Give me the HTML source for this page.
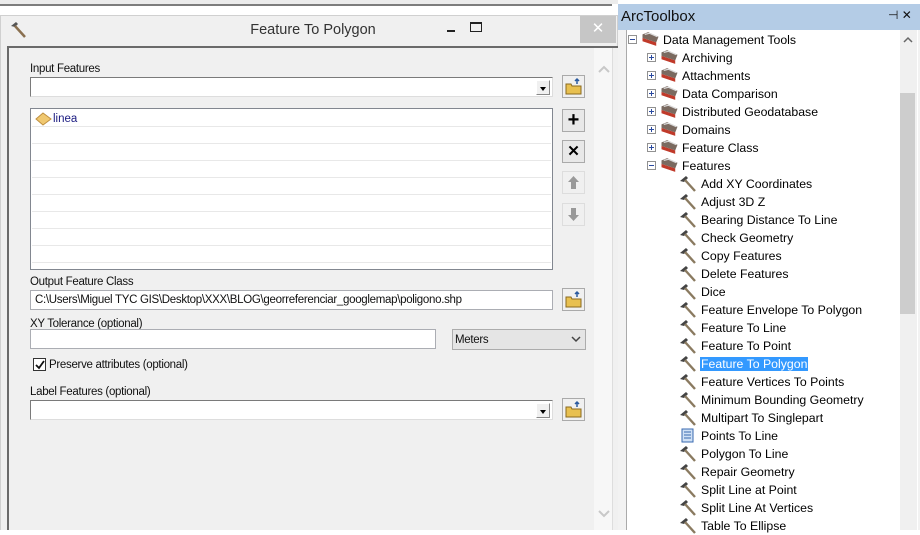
<!DOCTYPE html>
<html><head><meta charset="utf-8"><style>
*{margin:0;padding:0;box-sizing:border-box}
body{width:920px;height:530px;overflow:hidden;background:#fff;font-family:"Liberation Sans",sans-serif;font-size:12px;color:#000;position:relative}
.a{position:absolute}
.lbl{position:absolute;font-size:11.5px;letter-spacing:-0.3px;color:#111}
.box{position:absolute;background:#fff;border:1px solid #abadb3}
.cb{position:absolute;background:#fff;border:1px solid #7a7a7a;border-right-color:#ddd;border-bottom-color:#ddd}
.dd{position:absolute;right:2px;top:2px;width:14px;height:15px;background:#f0f0f0;border:1px solid #888;border-top-color:#fff;border-left-color:#fff}
.dd:after{content:"";position:absolute;left:3px;top:6px;border:3px solid transparent;border-top:4px solid #000}
.fb{position:absolute;width:23px;height:23px;border:1px solid #aaa;background:#f0f0f0}
.btn{position:absolute;width:23px;height:23px;border:1px solid #aaa;background:#e8e8e8;font-weight:bold;text-align:center;line-height:21px}
.tr{position:absolute;font-size:12.3px;color:#000;white-space:nowrap}
.pm{position:absolute;width:9px;height:9px;border:1px solid #919191;background:#fff}
.pm:before{content:"";position:absolute;left:1px;top:3px;width:5px;height:1px;background:#2a4aa0}
.pm.p:after{content:"";position:absolute;left:3px;top:1px;width:1px;height:5px;background:#2a4aa0}
.tb{position:absolute}
.hm{position:absolute;width:18px;height:18px}
</style></head><body>
<div class="a" style="left:0;top:0;width:618px;height:4px;background:#ececec"></div>
<div class="a" style="left:0;top:4px;width:612px;height:2px;background:#7d7d7d"></div>
<div class="a" style="left:0;top:15px;width:618px;height:515px;background:#f0f0f0;border:1px solid #d0d0d0;border-bottom:none"></div>
<div class="a" style="left:1px;top:16px;width:616px;height:30px;background:#f0f0f0"></div>
<svg class="a" style="left:8px;top:20px" width="20" height="20" viewBox="0 0 20 20"><path d="M3 6 L8 2 L10 4 L7 7 Z" fill="#555"/><path d="M7 6 L17 17" stroke="#8a7050" stroke-width="2.5"/></svg>
<div class="a" style="left:0;width:626px;top:22px;text-align:center;font-size:14.5px;color:#333">Feature To Polygon</div>
<div class="a" style="left:447px;top:30px;width:8px;height:2px;background:#222"></div>
<div class="a" style="left:470px;top:22px;width:12px;height:10px;border:1px solid #222;border-top-width:2px"></div>
<div class="a" style="left:580px;top:16px;width:36px;height:27px;background:#c6c6c6;color:#fff;text-align:center;font-size:15px;line-height:26px">✕</div>
<div class="a" style="left:7px;top:46px;width:611px;height:484px;border-left:2px solid #6a6a6a;border-top:2px solid #6a6a6a;background:#f0f0f0"></div>
<div class="a" style="left:594px;top:48px;width:18px;height:482px;background:#f7f7f7"></div>
<svg class="a" style="left:597px;top:64px" width="14" height="10"><path d="M2 8 L7 3 L12 8" stroke="#c8c8c8" stroke-width="2" fill="none"/></svg>
<svg class="a" style="left:597px;top:509px" width="14" height="10"><path d="M2 2 L7 7 L12 2" stroke="#c8c8c8" stroke-width="2" fill="none"/></svg>
<div class="a" style="left:612px;top:48px;width:1px;height:482px;background:#ddd"></div>

<div class="lbl" style="left:30px;top:63px">Input Features</div>
<div class="cb" style="left:30px;top:77px;width:523px;height:20px"><div class="dd"></div></div>
<div class="fb" style="left:562px;top:75px"><svg width="21" height="21"><path d="M3 8 h5 l1 2 h9 v8 h-15z" fill="#e8c050" stroke="#8a6a20"/><path d="M14 3 v5 M12 5 l2 -2 2 2" stroke="#2a5aa0" stroke-width="1.5" fill="none"/></svg></div>

<div class="a" style="left:30px;top:108px;width:523px;height:162px;background:#fff;border:1px solid #828790"></div>
<div class="a" style="left:32px;top:126px;width:519px;height:1px;background:#e8e8e8;box-shadow:0 17px #e8e8e8,0 34px #e8e8e8,0 51px #e8e8e8,0 68px #e8e8e8,0 85px #e8e8e8,0 102px #e8e8e8,0 119px #e8e8e8,0 136px #e8e8e8"></div>
<svg class="a" style="left:35px;top:112px" width="18" height="14"><path d="M1 7 L8 1 L16 7 L8 13 Z" fill="#f0c870" stroke="#c09040"/></svg>
<div class="tr" style="left:53px;top:113px;color:#1a1a80;font-size:11.5px">linea</div>

<div class="btn" style="left:562px;top:109px;font-size:20px">+</div>
<div class="btn" style="left:562px;top:140px;font-size:15px">✕</div>
<div class="btn" style="left:562px;top:171px;background:#f0f0f0;border-color:#ddd"><svg width="21" height="21"><path d="M10.5 4 L16 10 H13 V17 H8 V10 H5 Z" fill="#999"/></svg></div>
<div class="btn" style="left:562px;top:203px;background:#f0f0f0;border-color:#ddd"><svg width="21" height="21"><path d="M10.5 17 L16 11 H13 V4 H8 V11 H5 Z" fill="#999"/></svg></div>

<div class="lbl" style="left:30px;top:276px">Output Feature Class</div>
<div class="box" style="left:30px;top:290px;width:523px;height:20px"></div>
<div class="lbl" style="left:35px;top:294px">C:\Users\Miguel TYC GIS\Desktop\XXX\BLOG\georreferenciar_googlemap\poligono.shp</div>
<div class="fb" style="left:562px;top:288px"><svg width="21" height="21"><path d="M3 8 h5 l1 2 h9 v8 h-15z" fill="#e8c050" stroke="#8a6a20"/><path d="M14 3 v5 M12 5 l2 -2 2 2" stroke="#2a5aa0" stroke-width="1.5" fill="none"/></svg></div>

<div class="lbl" style="left:30px;top:318px">XY Tolerance (optional)</div>
<div class="box" style="left:30px;top:329px;width:406px;height:20px"></div>
<div class="a" style="left:452px;top:329px;width:134px;height:21px;background:#e5e5e5;border:1px solid #acacac"></div>
<div class="lbl" style="left:455px;top:334px">Meters</div>
<svg class="a" style="left:570px;top:334px" width="12" height="10"><path d="M2 3 L6 7 L10 3" stroke="#444" stroke-width="1.5" fill="none"/></svg>

<div class="a" style="left:33px;top:358px;width:13px;height:13px;background:#fff;border:1px solid #333"></div>
<svg class="a" style="left:34px;top:359px" width="12" height="12"><path d="M2 6 L5 9 L10 2" stroke="#111" stroke-width="1.8" fill="none"/></svg>
<div class="lbl" style="left:49px;top:359px">Preserve attributes (optional)</div>

<div class="lbl" style="left:30px;top:386px">Label Features (optional)</div>
<div class="cb" style="left:30px;top:400px;width:523px;height:20px"><div class="dd"></div></div>
<div class="fb" style="left:562px;top:398px"><svg width="21" height="21"><path d="M3 8 h5 l1 2 h9 v8 h-15z" fill="#e8c050" stroke="#8a6a20"/><path d="M14 3 v5 M12 5 l2 -2 2 2" stroke="#2a5aa0" stroke-width="1.5" fill="none"/></svg></div>

<div class="a" style="left:618px;top:4px;width:302px;height:526px;background:#f2f2f2"></div>
<div class="a" style="left:618px;top:4px;width:302px;height:26px;background:#b4cce6"></div>
<div class="a" style="left:621px;top:8px;font-size:15px;color:#111">ArcToolbox</div>
<div class="a" style="left:888px;top:8px;font-size:12px;color:#111">⊣ ✕</div>
<div class="a" style="left:626px;top:30px;width:292px;height:500px;background:#fff;border-left:1px solid #aaa"></div>
<div class="a" style="left:900px;top:30px;width:17px;height:500px;background:#f0f0f0"></div>
<div class="a" style="left:900px;top:93px;width:15px;height:221px;background:#cdcdcd"></div>
<svg class="a" style="left:902px;top:36px" width="12" height="8"><path d="M2 6 L6 2 L10 6" stroke="#666" stroke-width="1.5" fill="none"/></svg>

<div id="tree"></div>
<script>
var items=[[0,"Data Management Tools","m"],[1,"Archiving","p"],[1,"Attachments","p"],[1,"Data Comparison","p"],[1,"Distributed Geodatabase","p"],[1,"Domains","p"],[1,"Feature Class","p"],[1,"Features","m"],
[2,"Add XY Coordinates"],[2,"Adjust 3D Z"],[2,"Bearing Distance To Line"],[2,"Check Geometry"],[2,"Copy Features"],[2,"Delete Features"],[2,"Dice"],[2,"Feature Envelope To Polygon"],[2,"Feature To Line"],[2,"Feature To Point"],[2,"Feature To Polygon","sel"],[2,"Feature Vertices To Points"],[2,"Minimum Bounding Geometry"],[2,"Multipart To Singlepart"],[2,"Points To Line","scr"],[2,"Polygon To Line"],[2,"Repair Geometry"],[2,"Split Line at Point"],[2,"Split Line At Vertices"],[2,"Table To Ellipse"]];
var h="";
items.forEach(function(it,i){var y=30+i*18,l=it[0];
var tx=[663,682,701][l];
if(l<2){var bx=l==0?628:647;h+='<div class="pm '+(it[2]=="p"?"p":"")+'" style="left:'+bx+'px;top:'+(y+5)+'px"></div>';
var ix=l==0?641:660;
h+='<svg class="tb" style="left:'+ix+'px;top:'+(y+1)+'px" viewBox="0 0 16 14" width="19" height="16"><path d="M1 6 L13 10 L13 13 L1 9Z" fill="#c03a2a"/><path d="M1 3 L6 1 L15 5 L13 10 L1 6Z" fill="#7a6a60"/><path d="M3 3 L7 2 L14 5" stroke="#ddd" fill="none"/></svg>';}
else if(it[2]=="scr"){h+='<svg class="hm" style="left:679px;top:'+(y+1)+'px" width="18" height="18"><rect x="3" y="2" width="11" height="13" fill="#cfe0f5" stroke="#3a6ab0"/><path d="M5 5h7M5 8h7M5 11h7" stroke="#3a6ab0"/></svg>';}
else{h+='<svg class="hm" style="left:679px;top:'+(y+1)+'px" width="18" height="18"><path d="M1 6 L7 1 L9 3 L5 7Z" fill="#444"/><path d="M6 5 L16 16" stroke="#8a7a60" stroke-width="2.4"/></svg>';}
var st=it[2]=="sel"?'background:#3399ff;color:#fff;padding:0 1px;left:'+(tx-1)+'px':'left:'+tx+'px';
h+='<div class="tr" style="top:'+(y+3)+'px;'+st+'">'+it[1]+'</div>';});
document.getElementById("tree").innerHTML=h;
</script>
</body></html>
